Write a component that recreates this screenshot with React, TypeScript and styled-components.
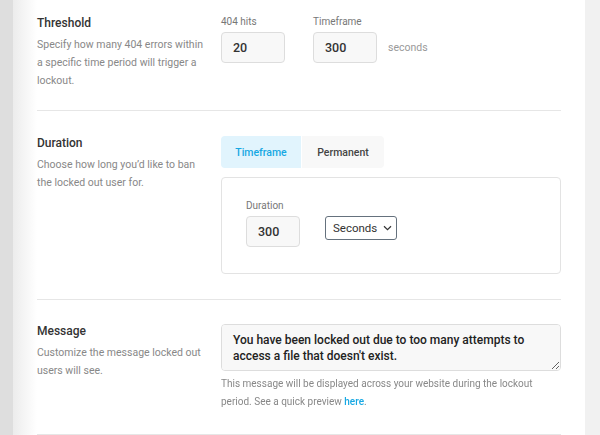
import styled, { createGlobalStyle } from "styled-components";

const GlobalStyle = createGlobalStyle`
  html, body {
    margin: 0;
    padding: 0;
  }
  body {
    background: linear-gradient(to right, #dedede 0, #dedede 13px, #f1f1f1 13px);
    font-family: Roboto, "Liberation Sans", Arial, sans-serif;
    height: 435px;
    overflow: hidden;
  }
`;

const Panel = styled.main`
  margin-left: 13px;
  width: 524px;
  min-height: 435px;
  padding: 0 24px;
  background: linear-gradient(to right, #ececec 0, #ffffff 24px);
`;

const Section = styled.section<{ $top: number; $bottom: number }>`
  display: grid;
  grid-template-columns: 184px 340px;
  padding: ${(p) => p.$top}px 0 ${(p) => p.$bottom}px;
  border-bottom: 1px solid #e6e6e6;
`;

const Intro = styled.div`
  margin-top: -2px;
`;

const Title = styled.h3`
  margin: 0 0 4px;
  font-size: 12px;
  line-height: 18px;
  font-weight: 500;
  color: #333;
`;

const Desc = styled.p`
  margin: 0;
  width: 168px;
  font-size: 10.5px;
  line-height: 18px;
  color: #888;
`;

const Fields = styled.div`
  display: flex;
  align-items: flex-start;
  gap: 28px;
`;

const Field = styled.div`
  display: flex;
  flex-direction: column;
  gap: 4px;
`;

const Label = styled.label`
  font-size: 10px;
  line-height: 12px;
  color: #777;
`;

const Input = styled.input<{ $w: number }>`
  box-sizing: border-box;
  width: ${(p) => p.$w}px;
  height: 31px;
  padding: 0 11px;
  border: 1px solid #dddddd;
  border-radius: 4px;
  background: #f8f8f8;
  font-family: inherit;
  font-size: 12.5px;
  font-weight: 500;
  color: #333;
  outline: none;
`;

const Unit = styled.span`
  margin: 16px 0 0 -17px;
  line-height: 31px;
  font-size: 10.5px;
  color: #999;
`;

const Tabs = styled.div`
  display: flex;
  gap: 1px;
  margin-bottom: 9px;
`;

const Tab = styled.button<{ $active?: boolean }>`
  width: ${(p) => (p.$active ? 80 : 82)}px;
  height: 32px;
  border: none;
  padding: 0;
  font-family: inherit;
  font-size: 10.5px;
  font-weight: 500;
  cursor: pointer;
  background: ${(p) => (p.$active ? "#e1f4fd" : "#f8f8f8")};
  color: ${(p) => (p.$active ? "#17a8e3" : "#444")};
  border-radius: ${(p) => (p.$active ? "4px 0 0 4px" : "0 4px 4px 0")};
`;

const Box = styled.div`
  box-sizing: border-box;
  height: 97px;
  padding: 22px 24px;
  border: 1px solid #e3e3e3;
  border-radius: 4px;
  display: flex;
  align-items: flex-start;
  gap: 25px;
`;

const Select = styled.button`
  box-sizing: border-box;
  margin-top: 16px;
  width: 72px;
  height: 24px;
  padding: 0 7px 0 7px;
  display: flex;
  align-items: center;
  gap: 6px;
  border: 1px solid #65717d;
  border-radius: 3px;
  background: #fff;
  font-family: inherit;
  font-size: 11.5px;
  color: #333;
  white-space: nowrap;
`;

const ChevronSvg = styled.svg`
  flex: 0 0 auto;
  width: 9px;
  height: 6px;
`;

const Message = styled.textarea`
  box-sizing: border-box;
  display: block;
  width: 340px;
  height: 47px;
  padding: 7px 11px;
  border: 1px solid #dddddd;
  border-radius: 4px;
  background: #f8f8f8;
  font-family: inherit;
  font-size: 12px;
  line-height: 16px;
  font-weight: 500;
  color: #222;
  outline: none;
  resize: vertical;
`;

const Help = styled.p`
  margin: 4px 0 0;
  font-size: 10px;
  line-height: 18px;
  color: #888;

  a {
    color: #17a8e3;
    font-weight: 500;
    text-decoration: none;
  }
`;

const Chevron = () => (
  <ChevronSvg viewBox="0 0 9 6" fill="none">
    <path d="M1 1.2L4.5 4.6L8 1.2" stroke="#333" strokeWidth="1.2" />
  </ChevronSvg>
);

export default function App() {
  return (
    <>
      <GlobalStyle />
      <Panel>
        <Section $top={16} $bottom={20}>
          <Intro>
            <Title>Threshold</Title>
            <Desc>
              Specify how many 404 errors within a specific time period will
              trigger a lockout.
            </Desc>
          </Intro>
          <Fields>
            <Field>
              <Label>404 hits</Label>
              <Input $w={64} defaultValue="20" />
            </Field>
            <Field>
              <Label>Timeframe</Label>
              <Input $w={64} defaultValue="300" />
            </Field>
            <Unit>seconds</Unit>
          </Fields>
        </Section>

        <Section $top={25} $bottom={25}>
          <Intro>
            <Title>Duration</Title>
            <Desc>Choose how long you’d like to ban the locked out user for.</Desc>
          </Intro>
          <div>
            <Tabs>
              <Tab $active>Timeframe</Tab>
              <Tab>Permanent</Tab>
            </Tabs>
            <Box>
              <Field>
                <Label>Duration</Label>
                <Input $w={54} defaultValue="300" />
              </Field>
              <Select>
                Seconds
                <Chevron />
              </Select>
            </Box>
          </div>
        </Section>

        <Section $top={24} $bottom={23}>
          <Intro>
            <Title>Message</Title>
            <Desc>Customize the message locked out users will see.</Desc>
          </Intro>
          <div>
            <Message defaultValue="You have been locked out due to too many attempts to access a file that doesn't exist." />
            <Help>
              This message will be displayed across your website during the
              lockout period. See a quick preview <a href="#">here</a>.
            </Help>
          </div>
        </Section>
      </Panel>
    </>
  );
}
